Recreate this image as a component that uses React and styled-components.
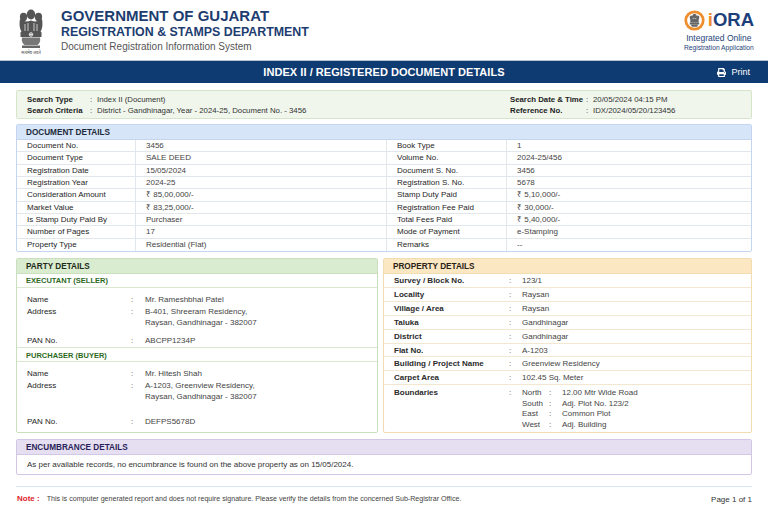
import React from "react";
import styled, { createGlobalStyle } from "styled-components";
import { FaPrint } from "react-icons/fa";

const GlobalStyle = createGlobalStyle`
  * { box-sizing: border-box; }
  body {
    margin: 0;
    background: #fff;
    font-family: "Liberation Sans", Arial, sans-serif;
    color: #333;
  }
`;

const searchLeft = [
  ["Search Type", "Index II (Document)"],
  ["Search Criteria", "District - Gandhinagar, Year - 2024-25, Document No. - 3456"],
];
const searchRight = [
  ["Search Date & Time", "20/05/2024 04:15 PM"],
  ["Reference No.", "IDX/2024/05/20/123456"],
];

const docRows = [
  ["Document No.", "3456", "Book Type", "1"],
  ["Document Type", "SALE DEED", "Volume No.", "2024-25/456"],
  ["Registration Date", "15/05/2024", "Document S. No.", "3456"],
  ["Registration Year", "2024-25", "Registration S. No.", "5678"],
  ["Consideration Amount", "₹ 85,00,000/-", "Stamp Duty Paid", "₹ 5,10,000/-"],
  ["Market Value", "₹ 83,25,000/-", "Registration Fee Paid", "₹ 30,000/-"],
  ["Is Stamp Duty Paid By", "Purchaser", "Total Fees Paid", "₹ 5,40,000/-"],
  ["Number of Pages", "17", "Mode of Payment", "e-Stamping"],
  ["Property Type", "Residential (Flat)", "Remarks", "--"],
];

const parties = [
  {
    title: "EXECUTANT (SELLER)",
    name: "Mr. Rameshbhai Patel",
    address: ["B-401, Shreeram Residency,", "Raysan, Gandhinagar - 382007"],
    pan: "ABCPP1234P",
    panGap: 6,
  },
  {
    title: "PURCHASER (BUYER)",
    name: "Mr. Hitesh Shah",
    address: ["A-1203, Greenview Residency,", "Raysan, Gandhinagar - 382007"],
    pan: "DEFPS5678D",
    panGap: 13,
  },
];

const propertyRows = [
  ["Survey / Block No.", "123/1"],
  ["Locality", "Raysan"],
  ["Village / Area", "Raysan"],
  ["Taluka", "Gandhinagar"],
  ["District", "Gandhinagar"],
  ["Flat No.", "A-1203"],
  ["Building / Project Name", "Greenview Residency"],
  ["Carpet Area", "102.45 Sq. Meter"],
];

const boundaries = [
  ["North", "12.00 Mtr Wide Road"],
  ["South", "Adj. Plot No. 123/2"],
  ["East", "Common Plot"],
  ["West", "Adj. Building"],
];

const tones = {
  blue: { bg: "#d7e5f8", border: "#c3d5ef", text: "#1d2a3a" },
  green: { bg: "#d9ecd0", border: "#c9dfbd", text: "#1f2a1a" },
  amber: { bg: "#fbe7c2", border: "#f2dcb0", text: "#2a2216" },
  purple: { bg: "#e6dff2", border: "#d3c7e7", text: "#2a1f58" },
};

const Emblem = () => (
  <svg width="30" height="42" viewBox="0 0 30 42">
    <g fill="#555">
      <ellipse cx="7.5" cy="9" rx="3.6" ry="4.2" />
      <ellipse cx="22.5" cy="9" rx="3.6" ry="4.2" />
      <ellipse cx="15" cy="6.5" rx="4.2" ry="5" />
      <path d="M4 11 Q2.5 18 5.5 24 L24.5 24 Q27.5 18 26 11 Q21 15 15 12.5 Q9 15 4 11Z" />
      <rect x="4.5" y="24" width="21" height="5" rx="0.6" />
      <path d="M6 29.5 L24 29.5 Q25 34 21.5 37 L8.5 37 Q5 34 6 29.5Z" fill="#777" />
      <rect x="6" y="37.5" width="18" height="2.5" fill="#666" />
    </g>
    <g stroke="#fff" strokeWidth="0.7" fill="none">
      <path d="M9 16 V23 M12 15 V23 M18 15 V23 M21 16 V23" />
      <circle cx="15" cy="26.5" r="1.8" />
      <path d="M15 24.7 V28.3 M13.2 26.5 H16.8" />
    </g>
  </svg>
);

const LogoMark = () => (
  <svg width="21" height="21" viewBox="0 0 20 20">
    <circle cx="10" cy="10" r="8.3" fill="#fff" stroke="#ef8e2c" strokeWidth="2.6" />
    <g fill="#666">
      <ellipse cx="10" cy="6" rx="2.2" ry="2.4" />
      <ellipse cx="7" cy="7.2" rx="1.6" ry="1.9" />
      <ellipse cx="13" cy="7.2" rx="1.6" ry="1.9" />
      <rect x="6" y="8.5" width="8" height="3.5" />
      <rect x="5.5" y="12" width="9" height="1.8" />
      <path d="M6.5 13.8 H13.5 L12.5 16 H7.5Z" />
    </g>
  </svg>
);

const App = () => {
  return (
    <Page>
      <GlobalStyle />
      <Header>
        <Brand>
          <EmblemBox>
            <Emblem />
            <Motto>सत्यमेव जयते</Motto>
          </EmblemBox>
          <TitleBlock>
            <GovTitle>GOVERNMENT OF GUJARAT</GovTitle>
            <DeptTitle>REGISTRATION &amp; STAMPS DEPARTMENT</DeptTitle>
            <SystemName>Document Registration Information System</SystemName>
          </TitleBlock>
        </Brand>
        <Logo>
          <LogoRow>
            <LogoMark />
            <LogoWord>
              <span>i</span>ORA
            </LogoWord>
          </LogoRow>
          <LogoLine>Integrated Online</LogoLine>
          <LogoSmall>Registration Application</LogoSmall>
        </Logo>
      </Header>

      <TitleBar>
        <BarTitle>INDEX II / REGISTERED DOCUMENT DETAILS</BarTitle>
        <PrintButton>
          <FaPrint size={9} />
          Print
        </PrintButton>
      </TitleBar>

      <Main>
        <SearchBox>
          <SearchGrid $labelWidth={63}>
            {searchLeft.map(([k, v]) => (
              <React.Fragment key={k}>
                <SearchLabel>{k}</SearchLabel>
                <span>:</span>
                <span>{v}</span>
              </React.Fragment>
            ))}
          </SearchGrid>
          <SearchGrid $labelWidth={76} $fixed>
            {searchRight.map(([k, v]) => (
              <React.Fragment key={k}>
                <SearchLabel>{k}</SearchLabel>
                <span>:</span>
                <span>{v}</span>
              </React.Fragment>
            ))}
          </SearchGrid>
        </SearchBox>

        <Card $tone="blue">
          <CardHeader $tone="blue">DOCUMENT DETAILS</CardHeader>
          <DocGrid>
            {docRows.map((row, i) =>
              row.map((cell, j) => (
                <DocCell
                  key={`${i}-${j}`}
                  $label={j % 2 === 0}
                  $last={i === docRows.length - 1}
                  $divider={j < 3}
                >
                  {cell}
                </DocCell>
              ))
            )}
          </DocGrid>
        </Card>

        <TwoCol>
          <Card $tone="green">
            <CardHeader $tone="green">PARTY DETAILS</CardHeader>
            {parties.map((p, i) => (
              <React.Fragment key={p.title}>
                <PartyHeading $divided={i > 0}>{p.title}</PartyHeading>
                <PartyBody>
                  <Field>
                    <FieldLabel>Name</FieldLabel>
                    <Colon>:</Colon>
                    <span>{p.name}</span>
                  </Field>
                  <Field>
                    <FieldLabel>Address</FieldLabel>
                    <Colon>:</Colon>
                    <span>
                      {p.address[0]}
                      <br />
                      {p.address[1]}
                    </span>
                  </Field>
                  <Field $mt={p.panGap}>
                    <FieldLabel>PAN No.</FieldLabel>
                    <Colon>:</Colon>
                    <span>{p.pan}</span>
                  </Field>
                </PartyBody>
              </React.Fragment>
            ))}
          </Card>

          <Card $tone="amber">
            <CardHeader $tone="amber">PROPERTY DETAILS</CardHeader>
            {propertyRows.map(([k, v]) => (
              <PropRow key={k}>
                <PropLabel>{k}</PropLabel>
                <Colon>:</Colon>
                <span>{v}</span>
              </PropRow>
            ))}
            <PropRow $auto>
              <PropLabel>Boundaries</PropLabel>
              <Colon>:</Colon>
              <BoundaryGrid>
                {boundaries.map(([d, v]) => (
                  <React.Fragment key={d}>
                    <span>{d}</span>
                    <span>:</span>
                    <span>{v}</span>
                  </React.Fragment>
                ))}
              </BoundaryGrid>
            </PropRow>
          </Card>
        </TwoCol>

        <Card $tone="purple">
          <CardHeader $tone="purple">ENCUMBRANCE DETAILS</CardHeader>
          <EncText>
            As per available records, no encumbrance is found on the above property as on
            15/05/2024.
          </EncText>
        </Card>
      </Main>

      <Footer>
        <NoteText>
          <NoteLabel>Note :</NoteLabel>
          This is computer generated report and does not require signature. Please verify the
          details from the concerned Sub-Registrar Office.
        </NoteText>
        <PageNo>Page 1 of 1</PageNo>
      </Footer>
    </Page>
  );
};

export default App;

const Page = styled.div`
  width: 768px;
  height: 512px;
  overflow: hidden;
  background: #fff;
`;

const Header = styled.header`
  height: 61px;
  display: flex;
  align-items: center;
  justify-content: space-between;
  padding: 0 14px 0 15px;
  border-bottom: 1px solid #b9c3cf;
`;

const Brand = styled.div`
  display: flex;
  align-items: center;
  gap: 14px;
`;

const EmblemBox = styled.div`
  width: 32px;
  display: flex;
  flex-direction: column;
  align-items: center;
  margin-top: 2px;
`;

const Motto = styled.span`
  font-family: "Noto Sans", "DejaVu Sans", sans-serif;
  font-size: 4px;
  line-height: 5px;
  color: #444;
  white-space: nowrap;
`;

const TitleBlock = styled.div`
  display: flex;
  flex-direction: column;
  margin-top: 1px;
`;

const GovTitle = styled.h1`
  margin: 0;
  font-size: 15px;
  line-height: 17px;
  font-weight: 700;
  color: #1d3d70;
`;

const DeptTitle = styled.h2`
  margin: 0;
  font-size: 12.4px;
  line-height: 16px;
  font-weight: 700;
  color: #1d3d70;
`;

const SystemName = styled.p`
  margin: 0;
  font-size: 10px;
  line-height: 14px;
  color: #555;
`;

const Logo = styled.div`
  display: flex;
  flex-direction: column;
  align-items: center;
  color: #1d3f7a;
  margin-top: 1px;
`;

const LogoRow = styled.div`
  display: flex;
  align-items: center;
  gap: 3px;
  height: 22px;
`;

const LogoWord = styled.span`
  font-size: 18.5px;
  font-weight: 700;
  color: #1d3f7a;
  span {
    color: #ef8e2c;
  }
`;

const LogoLine = styled.span`
  font-size: 8.5px;
  line-height: 10px;
  margin-top: 2px;
`;

const LogoSmall = styled.span`
  font-size: 6.7px;
  line-height: 9px;
`;

const TitleBar = styled.div`
  height: 22px;
  background: #0f3b73;
  color: #fff;
  display: grid;
  grid-template-columns: 1fr auto 1fr;
  align-items: center;
  padding: 0 18px;
`;

const BarTitle = styled.h2`
  grid-column: 2;
  margin: 0;
  font-size: 11px;
  font-weight: 700;
  letter-spacing: 0.05px;
`;

const PrintButton = styled.button`
  justify-self: end;
  display: flex;
  align-items: center;
  gap: 5px;
  background: none;
  border: 0;
  padding: 0;
  color: #fff;
  font-family: "Liberation Sans", Arial, sans-serif;
  font-size: 9px;
`;

const Main = styled.main`
  padding: 7px 16px 0;
  display: flex;
  flex-direction: column;
  gap: 6px;
`;

const SearchBox = styled.div`
  height: 29px;
  display: flex;
  align-items: center;
  padding: 0 10px;
  background: #f0f6ec;
  border: 1px solid #d5e5ca;
  border-radius: 2px;
  margin-bottom: -1px;
`;

const SearchGrid = styled.div`
  display: grid;
  grid-template-columns: ${(p) => p.$labelWidth}px 7px auto;
  font-size: 7.8px;
  line-height: 11px;
  color: #333;
  flex: ${(p) => (p.$fixed ? "0 0 231px" : "1")};
`;

const SearchLabel = styled.span`
  font-weight: 700;
  color: #222;
`;

const Card = styled.section`
  border: 1px solid ${(p) => tones[p.$tone].border};
  border-radius: 2px;
  background: #fff;
  overflow: hidden;
  display: flex;
  flex-direction: column;
`;

const CardHeader = styled.h3`
  margin: 0;
  height: 15px;
  line-height: 15px;
  padding: 0 9px;
  font-size: 8.2px;
  font-weight: 700;
  background: ${(p) => tones[p.$tone].bg};
  color: ${(p) => tones[p.$tone].text};
  border-bottom: 1px solid ${(p) => tones[p.$tone].border};
`;

const DocGrid = styled.div`
  display: grid;
  grid-template-columns: 119px 251px 120px 1fr;
`;

const DocCell = styled.div`
  height: 12.35px;
  line-height: 12px;
  padding: 0 10px;
  font-size: 8px;
  white-space: nowrap;
  color: ${(p) => (p.$label ? "#262626" : "#444")};
  border-bottom: ${(p) => (p.$last ? "none" : "1px solid #e2e7ee")};
  border-right: ${(p) => (p.$divider ? "1px solid #e2e7ee" : "none")};
`;

const TwoCol = styled.div`
  display: grid;
  grid-template-columns: 362px 1fr;
  gap: 5px;
  height: 175px;
`;

const PartyHeading = styled.h4`
  margin: ${(p) => (p.$divided ? "1px 0 0" : "0")};
  height: ${(p) => (p.$divided ? "15px" : "14px")};
  line-height: ${(p) => (p.$divided ? "15px" : "14px")};
  padding: 0 9px;
  font-size: 7.5px;
  font-weight: 700;
  color: #2d6a1e;
  border-top: ${(p) => (p.$divided ? "1px solid #d9e8cf" : "none")};
  border-bottom: 1px solid #d9e8cf;
`;

const PartyBody = styled.div`
  padding: 6px 10px 0;
  display: flex;
  flex-direction: column;
  gap: 1px;
`;

const Field = styled.div`
  display: grid;
  grid-template-columns: 104px 14px 1fr;
  font-size: 8px;
  line-height: 11px;
  color: #444;
  margin-top: ${(p) => p.$mt || 0}px;
`;

const FieldLabel = styled.span`
  color: #262626;
`;

const Colon = styled.span`
  color: #555;
`;

const PropRow = styled.div`
  display: grid;
  grid-template-columns: 115px 13px 1fr;
  align-items: start;
  padding: ${(p) => (p.$auto ? "3px 10px 0" : "0 10px")};
  height: ${(p) => (p.$auto ? "auto" : "13.9px")};
  line-height: ${(p) => (p.$auto ? "10.6px" : "13.5px")};
  font-size: 8px;
  color: #444;
  border-bottom: ${(p) => (p.$auto ? "none" : "1px solid #f4e7cf")};
`;

const PropLabel = styled.span`
  font-weight: 700;
  color: #2b2b2b;
`;

const BoundaryGrid = styled.div`
  display: grid;
  grid-template-columns: 27px 13px 1fr;
`;

const EncText = styled.p`
  margin: 0;
  height: 19px;
  line-height: 19px;
  padding: 0 10px;
  font-size: 8px;
  color: #333;
`;

const Footer = styled.footer`
  margin: 11px 16px 0;
  padding-top: 6px;
  border-top: 1px solid #d8e5f4;
  display: flex;
  justify-content: space-between;
  align-items: center;
  line-height: 11px;
`;

const NoteText = styled.p`
  margin: 0;
  font-size: 7.1px;
  color: #444;
`;

const NoteLabel = styled.strong`
  color: #e0262b;
  font-size: 8px;
  margin-right: 7px;
  margin-left: 1px;
`;

const PageNo = styled.span`
  font-size: 8px;
  color: #333;
`;
